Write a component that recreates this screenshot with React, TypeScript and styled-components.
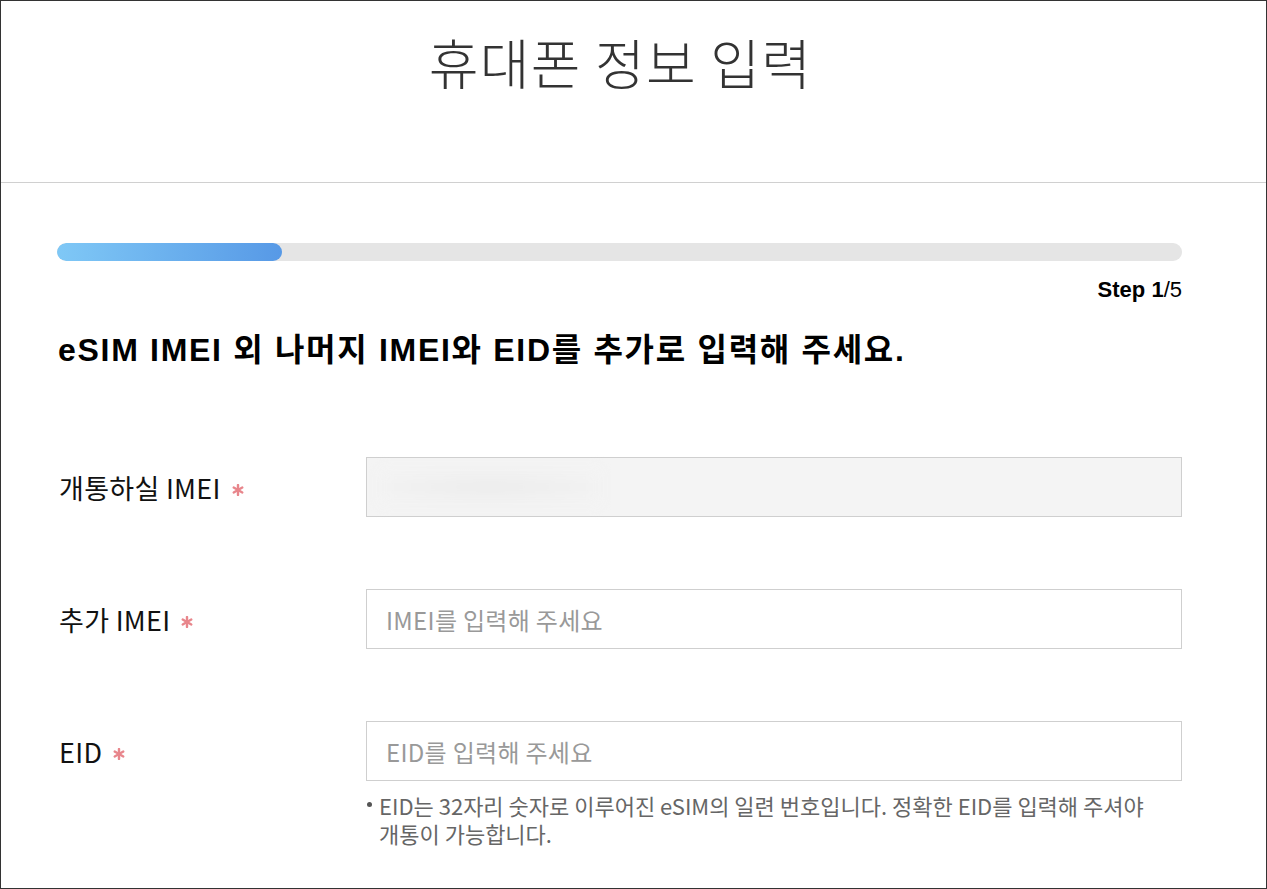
import React from 'react';
import styled, { createGlobalStyle } from 'styled-components';

const GlobalStyle = createGlobalStyle`
  html, body {
    margin: 0;
    padding: 0;
    background: #fff;
  }

  body {
    font-family: 'Liberation Sans', 'Noto Sans CJK KR', sans-serif;
    color: #111;
  }
`;

const Page = styled.div`
  box-sizing: border-box;
  width: 1267px;
  height: 889px;
  border: 1px solid #333;
  overflow: hidden;
`;

const Header = styled.header`
  display: flex;
  align-items: center;
  justify-content: center;
  height: 181px;
  border-bottom: 1px solid #d0d0d0;

  & h1 {
    margin: 0 26px 60px 0;
    font-family: 'Noto Sans CJK KR', sans-serif;
    font-size: 54px;
    font-weight: 300;
    letter-spacing: 1.3px;
    color: #333;
  }
`;

const Body = styled.main`
  padding: 60px 84px 0 56px;
`;

const Track = styled.div`
  height: 18px;
  border-radius: 9px;
  background: #e5e5e5;
  overflow: hidden;
`;

const Fill = styled.div`
  height: 100%;
  border-radius: 9px;
  background: linear-gradient(90deg, #7fc8f6 0%, #5799e6 100%);
`;

const StepText = styled.div`
  margin-top: 17px;
  text-align: right;
  font-size: 22px;
  line-height: 24px;
  color: #000;

  & b {
    font-weight: 700;
  }
`;

const Title = styled.h2`
  margin: 28px 0 0 1px;
  font-size: 32px;
  line-height: 40px;
  font-weight: 700;
  letter-spacing: 1.7px;
  color: #000;
`;

const Form = styled.div`
  display: flex;
  flex-direction: column;
  gap: 72px;
  margin-top: 87px;
`;

const Row = styled.div`
  display: grid;
  grid-template-columns: 309px 1fr;
  align-items: start;
`;

const Label = styled.label`
  display: flex;
  align-items: center;
  height: 60px;
  padding-left: 2px;
  font-family: 'Noto Sans CJK KR', sans-serif;
  font-size: 27px;
  letter-spacing: 0.3px;
  color: #111;

  & svg {
    margin-left: 11px;
    margin-top: 6px;
  }
`;

const Field = styled.div`
  display: flex;
  flex-direction: column;
`;

const Input = styled.input<{ $disabled?: boolean }>`
  box-sizing: border-box;
  width: 100%;
  height: 60px;
  padding: 0 19px;
  border: 1px solid #cfcfcf;
  border-radius: 0;
  outline: none;
  background: ${(p) => (p.$disabled ? '#f4f4f4' : '#fff')};
  font-family: 'Noto Sans CJK KR', sans-serif;
  font-size: 24px;
  letter-spacing: 0.3px;
  color: #333;

  &::placeholder {
    color: #999;
  }
`;

const Masked = styled.div`
  position: relative;
`;

const Blur = styled.div`
  position: absolute;
  left: 14px;
  top: 12px;
  width: 220px;
  height: 36px;
  filter: blur(6px);
  background: radial-gradient(ellipse at 50% 50%, #ececec 0%, #f1f1f1 60%, #f4f4f4 100%);
`;

const Note = styled.p`
  position: relative;
  margin: 10px 0 0;
  padding-left: 13px;
  font-family: 'Noto Sans CJK KR', sans-serif;
  font-size: 22px;
  line-height: 28px;
  word-break: keep-all;
  color: #666;

  &::before {
    content: '';
    position: absolute;
    left: 1px;
    top: 11px;
    width: 5px;
    height: 5px;
    border-radius: 50%;
    background: #555;
  }
`;

const Required = () => (
  <svg width="12" height="12" viewBox="0 0 12 12" aria-hidden="true">
    <g stroke="#e8868c" strokeWidth="2.4" strokeLinecap="round">
      <line x1="6" y1="1" x2="6" y2="11" />
      <line x1="1.7" y1="3.5" x2="10.3" y2="8.5" />
      <line x1="1.7" y1="8.5" x2="10.3" y2="3.5" />
    </g>
  </svg>
);

const App = () => {
  const step = 1;
  const total = 5;

  return (
    <Page>
      <GlobalStyle />
      <Header>
        <h1>휴대폰 정보 입력</h1>
      </Header>

      <Body>
        <Track>
          <Fill style={{ width: `${(step / total) * 100}%` }} />
        </Track>
        <StepText>
          <b>Step {step}</b>/{total}
        </StepText>

        <Title>eSIM IMEI 외 나머지 IMEI와 EID를 추가로 입력해 주세요.</Title>

        <Form>
          <Row>
            <Label>
              개통하실 IMEI
              <Required />
            </Label>
            <Masked>
              <Input $disabled disabled />
              <Blur />
            </Masked>
          </Row>

          <Row>
            <Label>
              추가 IMEI
              <Required />
            </Label>
            <Input placeholder="IMEI를 입력해 주세요" />
          </Row>

          <Row>
            <Label>
              EID
              <Required />
            </Label>
            <Field>
              <Input placeholder="EID를 입력해 주세요" />
              <Note>
                EID는 32자리 숫자로 이루어진 eSIM의 일련 번호입니다. 정확한 EID를 입력해 주셔야 개통이 가능합니다.
              </Note>
            </Field>
          </Row>
        </Form>
      </Body>
    </Page>
  );
};

export default App;
